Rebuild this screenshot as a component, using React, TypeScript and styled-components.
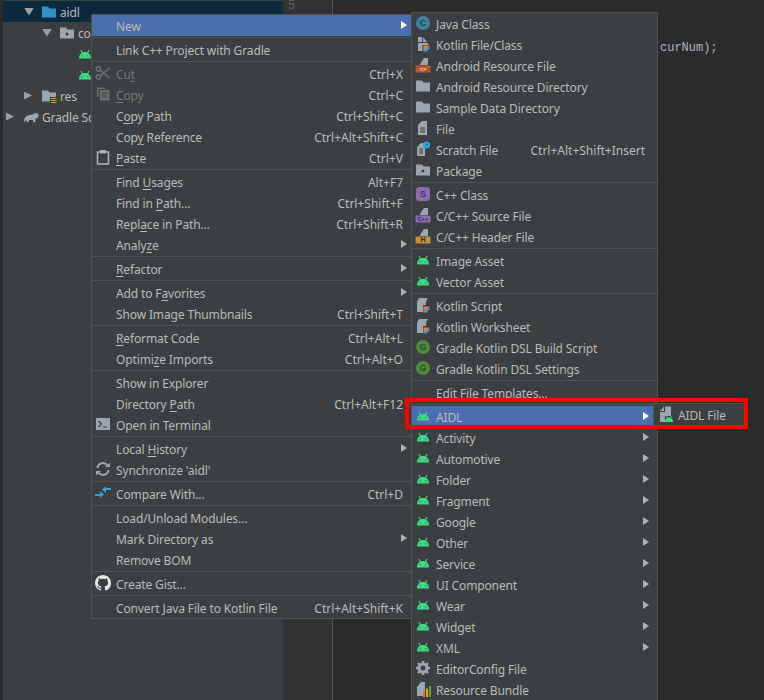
import React from "react";
import styled, { createGlobalStyle } from "styled-components";

const Global = createGlobalStyle`
  html, body { margin: 0; padding: 0; background: #2b2b2b; }
  body { font-family: "Noto Sans", "Liberation Sans", sans-serif; }
`;

const Screen = styled.div`
  position: relative;
  width: 764px;
  height: 700px;
  overflow: hidden;
  display: flex;
  background: #2b2b2b;
  color: #bbbbbb;
  font-size: 12px;
`;
const ProjectPanel = styled.div`
  width: 280px;
  margin-left: 3px;
  padding-top: 1px;
  background: #3c3f41;
  display: flex;
  flex-direction: column;
`;
const LeftEdge = styled.div`
  position: absolute;
  left: 0;
  top: 0;
  bottom: 0;
  width: 3px;
  background: #2b2b2b;
`;
const TreeRow = styled.div<{ $indent: number; $selected?: boolean }>`
  height: 21px;
  display: flex;
  align-items: center;
  gap: 3px;
  padding-left: ${(p) => p.$indent}px;
  background: ${(p) => (p.$selected ? "#0d293e" : "transparent")};
  color: #bbbbbb;
  white-space: nowrap;
`;
const TreeLabel = styled.span`
  padding-top: 2px;
  letter-spacing: -0.15px;
`;
const Gutter = styled.div`
  width: 50px;
  background: #313335;
  border-right: 1px solid #555555;
  color: #606366;
  font-family: "Liberation Mono", monospace;
  font-size: 12px;
  padding: 0 0 0 5px;
  box-sizing: border-box;
  line-height: 12px;
`;
const Editor = styled.div`
  flex: 1;
  padding: 40px 0 0 327px;
  color: #a9b7c6;
  font-family: "Liberation Mono", monospace;
  font-size: 12px;
  line-height: 16px;
  white-space: pre;
`;
const Menu = styled.div<{ $left: number; $top: number; $width: number }>`
  position: absolute;
  left: ${(p) => p.$left}px;
  top: ${(p) => p.$top}px;
  width: ${(p) => p.$width}px;
  box-sizing: border-box;
  background: #3c3f41;
  border: 1px solid #515151;
  display: flex;
  flex-direction: column;
`;
const Row = styled.div<{ $active?: boolean; $muted?: boolean }>`
  height: 21px;
  flex: none;
  box-sizing: border-box;
  position: relative;
  display: flex;
  align-items: center;
  justify-content: space-between;
  padding: 2px 12px 0 24px;
  background: ${(p) => (p.$active ? "#4b6eaf" : "transparent")};
  color: ${(p) => (p.$muted ? "#777777" : "#bbbbbb")};
  white-space: nowrap;
`;
const RowLabel = styled.span`
  letter-spacing: -0.13px;
`;
const RowIcon = styled.span`
  position: absolute;
  left: 3px;
  top: 2px;
  width: 16px;
  height: 16px;
  display: block;
  svg { display: block; }
`;
const Shortcut = styled.span`
  color: #bbbbbb;
`;
const Arrow = styled.span<{ $active?: boolean }>`
  position: absolute;
  right: 8px;
  top: 6px;
  width: 0;
  height: 0;
  border-left: 6px solid ${(p) => (p.$active ? "#ffffff" : "#afb1b3")};
  border-top: 4px solid transparent;
  border-bottom: 4px solid transparent;
`;
const Separator = styled.div`
  height: 3px;
  flex: none;
  display: flex;
  align-items: center;
  &::before {
    content: "";
    display: block;
    width: 100%;
    height: 1px;
    background: #515151;
  }
`;
const Mn = styled.span`
  text-decoration: underline;
  text-underline-offset: 2px;
  text-decoration-thickness: 1px;
`;
const Highlight = styled.div`
  position: absolute;
  left: 405px;
  top: 398px;
  width: 343px;
  height: 31px;
  box-sizing: border-box;
  border: 4px solid #ff0000;
  pointer-events: none;
`;

const Svg = ({ children, size = 16 }: { children: React.ReactNode; size?: number }) => (
  <svg width={size} height={size} viewBox="0 0 16 16">{children}</svg>
);
const Android = () => (
  <Svg>
    <path d="M2 12.5 C2 8.5 4.5 6 8 6 S14 8.5 14 12.5 Z" fill="#3ddc84" />
    <path d="M4 4 L5.5 7 M12 4 L10.5 7" stroke="#3ddc84" strokeWidth="1.1" />
    <circle cx="5.2" cy="9.8" r=".6" fill="#3c3f41" />
    <circle cx="10.8" cy="9.8" r=".6" fill="#3c3f41" />
  </Svg>
);
const Folder = ({ fill = "#9aa7b0", dot }: { fill?: string; dot?: boolean }) => (
  <Svg>
    <path d="M1 2.5 H7 L8.5 4.5 H15 V13.5 H1 Z" fill={fill} />
    {dot && <circle cx="8" cy="9" r="1.5" fill="#3c3f41" />}
  </Svg>
);
const ResFolder = () => (
  <Svg>
    <path d="M1 2.5 H7 L8.5 4.5 H15 V9 H9 V13.5 H1 Z" fill="#9aa7b0" />
    <path d="M10 10.5 H15.5 M10 12.5 H15.5 M10 14.5 H15.5" stroke="#c9a13d" strokeWidth="1" />
  </Svg>
);
const PlainFile = () => (
  <Svg>
    <path d="M3 5 L7 1 H12 V15 H3 Z" fill="#9aa7b0" />
    <path d="M5 8 H10 M5 10 H10 M5 12 H10" stroke="#3c3f41" strokeWidth="1" />
  </Svg>
);
const JavaClass = () => (
  <Svg>
    <circle cx="8" cy="8" r="7" fill="#40829c" />
    <text x="8" y="11" textAnchor="middle" fontSize="9" fontWeight="700" fontFamily="Liberation Sans" fill="#24424e">C</text>
  </Svg>
);
const KotlinMark = () => (
  <path d="M8.5 15.5 L12 11.5 H15.5 L11.5 15.5 Z" fill="#29a7f0" />
);
const KotlinFile = () => (
  <Svg>
    <path d="M3 7 V15 H7.5 V9 H13 V7 Z M3 6 H7 V1 H3 Z M8 1 V6 H12 Z" fill="#9aa7b0" />
    <path d="M8.5 9.5 H15 L8.5 15.5 Z" fill="#f0772d" />
    <KotlinMark />
  </Svg>
);
const KotlinScript = () => (
  <Svg>
    <path d="M2 7 C2 4 3 1 5 1 H13 C11 3 11 5 11 8 H8 V15 H2 Z" fill="#9aa7b0" />
    <path d="M8.5 9.5 H15 L8.5 15.5 Z" fill="#f0772d" />
    <KotlinMark />
  </Svg>
);
const TaggedFile = ({ fill, tagColor, label, size = 6 }: { fill: string; tagColor: string; label: string; size?: number }) => (
  <Svg>
    <path d="M5 7 L9 1 H13 V8 H5 Z" fill="#9aa7b0" />
    <rect x="0.5" y="8.5" width="15" height="7" fill={fill} />
    <text x="8" y="14.3" textAnchor="middle" fontSize={size} fontWeight="700" fontFamily="Liberation Sans" fill={tagColor}>{label}</text>
  </Svg>
);
const Scratch = () => (
  <Svg>
    <path d="M2 6 L6 2 H10 V15 H2 Z" fill="#9aa7b0" />
    <path d="M4 8 H8 M4 10 H8 M4 12 H8" stroke="#3c3f41" strokeWidth="1" />
    <circle cx="11.5" cy="4" r="3.5" fill="#29a7e0" />
    <path d="M11.5 2.5 V4 H13" stroke="#1c3c50" strokeWidth=".8" fill="none" />
  </Svg>
);
const CppClass = () => (
  <Svg>
    <rect x="1" y="1" width="14" height="14" rx="3" fill="#8b6cb0" />
    <text x="8" y="11" textAnchor="middle" fontSize="9" fontWeight="700" fontFamily="Liberation Sans" fill="#43335c">S</text>
  </Svg>
);
const Gradle = () => (
  <Svg>
    <circle cx="8" cy="8" r="7" fill="#4f8a3c" />
    <text x="8" y="11" textAnchor="middle" fontSize="9" fontWeight="700" fontFamily="Liberation Sans" fill="#2b4a22">G</text>
  </Svg>
);
const Gear = () => (
  <Svg>
    <circle cx="8" cy="8" r="4" fill="none" stroke="#9aa7b0" strokeWidth="3" />
    <path d="M8 1 V4 M8 12 V15 M1 8 H4 M12 8 H15 M3 3 L5 5 M11 11 L13 13 M13 3 L11 5 M5 11 L3 13" stroke="#9aa7b0" strokeWidth="2.4" />
  </Svg>
);
const Bundle = () => (
  <Svg>
    <path d="M2 6 L6 1 H10 V15 H2 Z" fill="#9aa7b0" />
    <rect x="8" y="10" width="2" height="6" fill="#e8732d" />
    <rect x="11" y="7.5" width="2" height="8.5" fill="#e8a52d" />
    <rect x="14" y="5" width="2" height="11" fill="#5fa83f" />
  </Svg>
);
const AidlFile = () => (
  <Svg>
    <path d="M3 5 L7 0.5 V5 Z M8 0.5 H14 V10 H8 V16 H3 V6 H8 Z" fill="#9aa7b0" />
    <path d="M8 16 C8 13 9.5 11.5 12 11.5 S16 13 16 16 Z" fill="#3ddc84" />
    <path d="M9.5 10 L10.5 12 M14.5 10 L13.5 12" stroke="#3ddc84" strokeWidth=".9" />
  </Svg>
);
const Scissors = () => (
  <Svg>
    <circle cx="3.5" cy="4" r="2.2" fill="none" stroke="#6e6e6e" strokeWidth="1.4" />
    <circle cx="3.5" cy="12" r="2.2" fill="none" stroke="#6e6e6e" strokeWidth="1.4" />
    <path d="M5 5 L14.5 13 M5 11 L14.5 3" stroke="#6e6e6e" strokeWidth="1.5" />
  </Svg>
);
const CopyIcon = () => (
  <Svg>
    <path d="M2 1.5 H10 V3 H3.5 V11 H2 Z" fill="#6e6e6e" />
    <rect x="5" y="4" width="9.5" height="10.5" fill="#6e6e6e" />
    <path d="M7 7 H12.5 M7 9 H12.5 M7 11 H12.5" stroke="#3c3f41" strokeWidth="1" />
  </Svg>
);
const Paste = () => (
  <Svg>
    <rect x="2.5" y="3" width="11" height="12" fill="none" stroke="#afb1b3" strokeWidth="1.6" />
    <rect x="5" y="1" width="6" height="3.5" fill="#afb1b3" />
    <rect x="4" y="5" width="8" height="9" fill="#3c3f41" />
  </Svg>
);
const Terminal = () => (
  <Svg>
    <rect x="1" y="2" width="14" height="12" fill="#9aa7b0" />
    <path d="M3.5 5 L6.5 8 L3.5 11 M8 11 H12" stroke="#3c3f41" strokeWidth="1.2" fill="none" />
  </Svg>
);
const Sync = () => (
  <Svg>
    <path d="M2.5 7 A5.5 5.5 0 0 1 12.5 4.5 M13.5 9 A5.5 5.5 0 0 1 3.5 11.5" fill="none" stroke="#9aa7b0" strokeWidth="2" />
    <path d="M10 6 H15 V1.5 Z M6 10 H1 V14.5 Z" fill="#9aa7b0" />
  </Svg>
);
const Compare = () => (
  <Svg>
    <path d="M0 10 H5 V7 L9 10.5 L5 14 V12 H0 Z" fill="#389fd6" transform="translate(0 -1)" />
    <path d="M16 6 H11 V9 L7 5.5 L11 2 V4 H16 Z" fill="#389fd6" transform="translate(0 -1)" />
  </Svg>
);
const GitHub = () => (
  <Svg>
    <path fill="#e6e6e6" d="M8 0C3.58 0 0 3.58 0 8c0 3.54 2.29 6.53 5.47 7.59.4.07.55-.17.55-.38 0-.19-.01-.82-.01-1.49-2.01.37-2.53-.49-2.69-.94-.09-.23-.48-.94-.82-1.13-.28-.15-.68-.52-.01-.53.63-.01 1.08.58 1.23.82.72 1.21 1.87.87 2.33.66.07-.52.28-.87.51-1.07-1.78-.2-3.64-.89-3.64-3.95 0-.87.31-1.59.82-2.15-.08-.2-.36-1.02.08-2.12 0 0 .67-.21 2.2.82.64-.18 1.32-.27 2-.27s1.36.09 2 .27c1.53-1.04 2.2-.82 2.2-.82.44 1.1.16 1.92.08 2.12.51.56.82 1.27.82 2.15 0 3.07-1.87 3.75-3.65 3.95.29.25.54.73.54 1.48 0 1.07-.01 1.93-.01 2.2 0 .21.15.46.55.38A8.01 8.01 0 0 0 16 8c0-4.42-3.58-8-8-8z" />
  </Svg>
);
const Elephant = () => (
  <Svg>
    <path d="M1 13 C1 9 3 6 7 6 C10 6 11 4 13 4 C15 4 16 5.5 15.5 7.5 C15 9 13 9 12.5 10 V13 H10 V11 H6 V13 H3.5 V11 Z" fill="#9aa7b0" />
  </Svg>
);
const TreeArrow = styled.span<{ $open?: boolean }>`
  width: 10px;
  height: 8px;
  flex: none;
  display: block;
  margin-right: 4px;
  background: #9da0a2;
  clip-path: ${(p) =>
    p.$open ? "polygon(0 0, 100% 0, 50% 100%)" : "polygon(0 0, 80% 50%, 0 100%)"};
`;

type Item =
  | "sep"
  | {
      label: React.ReactNode;
      key?: string;
      icon?: React.ReactNode;
      arrow?: boolean;
      active?: boolean;
      muted?: boolean;
    };

const mainItems: Item[] = [
  { label: "New", arrow: true, active: true },
  "sep",
  { label: "Link C++ Project with Gradle" },
  "sep",
  { label: <>Cu<Mn>t</Mn></>, key: "Ctrl+X", icon: <Scissors />, muted: true },
  { label: <><Mn>C</Mn>opy</>, key: "Ctrl+C", icon: <CopyIcon />, muted: true },
  { label: <>C<Mn>o</Mn>py Path</>, key: "Ctrl+Shift+C" },
  { label: <>Cop<Mn>y</Mn> Reference</>, key: "Ctrl+Alt+Shift+C" },
  { label: <><Mn>P</Mn>aste</>, key: "Ctrl+V", icon: <Paste /> },
  "sep",
  { label: <>Find <Mn>U</Mn>sages</>, key: "Alt+F7" },
  { label: <>Find in <Mn>P</Mn>ath...</>, key: "Ctrl+Shift+F" },
  { label: <>Repl<Mn>a</Mn>ce in Path...</>, key: "Ctrl+Shift+R" },
  { label: <>Analy<Mn>z</Mn>e</>, arrow: true },
  "sep",
  { label: <><Mn>R</Mn>efactor</>, arrow: true },
  "sep",
  { label: <>Add to F<Mn>a</Mn>vorites</>, arrow: true },
  { label: "Show Image Thumbnails", key: "Ctrl+Shift+T" },
  "sep",
  { label: <><Mn>R</Mn>eformat Code</>, key: "Ctrl+Alt+L" },
  { label: <>Optimi<Mn>z</Mn>e Imports</>, key: "Ctrl+Alt+O" },
  "sep",
  { label: "Show in Explorer" },
  { label: <>Directory <Mn>P</Mn>ath</>, key: "Ctrl+Alt+F12" },
  { label: "Open in Terminal", icon: <Terminal /> },
  "sep",
  { label: <>Local <Mn>H</Mn>istory</>, arrow: true },
  { label: "Synchronize 'aidl'", icon: <Sync /> },
  "sep",
  { label: "Compare With...", key: "Ctrl+D", icon: <Compare /> },
  "sep",
  { label: "Load/Unload Modules..." },
  { label: "Mark Directory as", arrow: true },
  { label: "Remove BOM" },
  "sep",
  { label: "Create Gist...", icon: <GitHub /> },
  "sep",
  { label: "Convert Java File to Kotlin File", key: "Ctrl+Alt+Shift+K" },
];

const androidRow = (label: string, active?: boolean): Item => ({
  label,
  icon: <Android />,
  arrow: true,
  active,
});

const newItems: Item[] = [
  { label: "Java Class", icon: <JavaClass /> },
  { label: "Kotlin File/Class", icon: <KotlinFile /> },
  { label: "Android Resource File", icon: <TaggedFile fill="#b7562a" tagColor="#e8d8c8" label="<>" /> },
  { label: "Android Resource Directory", icon: <Folder /> },
  { label: "Sample Data Directory", icon: <Folder /> },
  { label: "File", icon: <PlainFile /> },
  { label: "Scratch File", key: "Ctrl+Alt+Shift+Insert", icon: <Scratch /> },
  { label: "Package", icon: <Folder dot /> },
  "sep",
  { label: "C++ Class", icon: <CppClass /> },
  { label: "C/C++ Source File", icon: <TaggedFile fill="#8b6cb0" tagColor="#2b2233" label="C++" size={5.5} /> },
  { label: "C/C++ Header File", icon: <TaggedFile fill="#c0903a" tagColor="#3c2c10" label="H" size={7} /> },
  "sep",
  { label: "Image Asset", icon: <Android /> },
  { label: "Vector Asset", icon: <Android /> },
  "sep",
  { label: "Kotlin Script", icon: <KotlinScript /> },
  { label: "Kotlin Worksheet", icon: <KotlinScript /> },
  { label: "Gradle Kotlin DSL Build Script", icon: <Gradle /> },
  { label: "Gradle Kotlin DSL Settings", icon: <Gradle /> },
  "sep",
  { label: "Edit File Templates..." },
  "sep",
  androidRow("AIDL", true),
  androidRow("Activity"),
  androidRow("Automotive"),
  androidRow("Folder"),
  androidRow("Fragment"),
  androidRow("Google"),
  androidRow("Other"),
  androidRow("Service"),
  androidRow("UI Component"),
  androidRow("Wear"),
  androidRow("Widget"),
  androidRow("XML"),
  { label: "EditorConfig File", icon: <Gear /> },
  { label: "Resource Bundle", icon: <Bundle /> },
];

const MenuBody = ({ items }: { items: Item[] }) => (
  <>
    {items.map((item, i) =>
      item === "sep" ? (
        <Separator key={i} />
      ) : (
        <Row key={i} $active={item.active} $muted={item.muted}>
          {item.icon && <RowIcon>{item.icon}</RowIcon>}
          <RowLabel>{item.label}</RowLabel>
          {item.key && <Shortcut>{item.key}</Shortcut>}
          {item.arrow && <Arrow $active={item.active} />}
        </Row>
      )
    )}
  </>
);

export default function App() {
  return (
    <>
      <Global />
      <Screen>
        <LeftEdge />
        <ProjectPanel>
          <TreeRow $indent={21} $selected>
            <TreeArrow $open />
            <Folder fill="#3592c4" />
            <TreeLabel>aidl</TreeLabel>
          </TreeRow>
          <TreeRow $indent={39}>
            <TreeArrow $open />
            <Folder dot />
            <TreeLabel>co</TreeLabel>
          </TreeRow>
          <TreeRow $indent={74}>
            <Android />
          </TreeRow>
          <TreeRow $indent={74}>
            <Android />
          </TreeRow>
          <TreeRow $indent={21}>
            <TreeArrow />
            <ResFolder />
            <TreeLabel>res</TreeLabel>
          </TreeRow>
          <TreeRow $indent={3}>
            <TreeArrow />
            <Elephant />
            <TreeLabel>Gradle Sc</TreeLabel>
          </TreeRow>
        </ProjectPanel>
        <Gutter>5</Gutter>
        <Editor>curNum);</Editor>
        <Menu $left={91} $top={14} $width={325}>
          <MenuBody items={mainItems} />
        </Menu>
        <Menu $left={411} $top={12} $width={247}>
          <MenuBody items={newItems} />
        </Menu>
        <Menu $left={653} $top={403} $width={92}>
          <Row>
            <RowIcon><AidlFile /></RowIcon>
            <RowLabel>AIDL File</RowLabel>
          </Row>
        </Menu>
        <Highlight />
      </Screen>
    </>
  );
}
